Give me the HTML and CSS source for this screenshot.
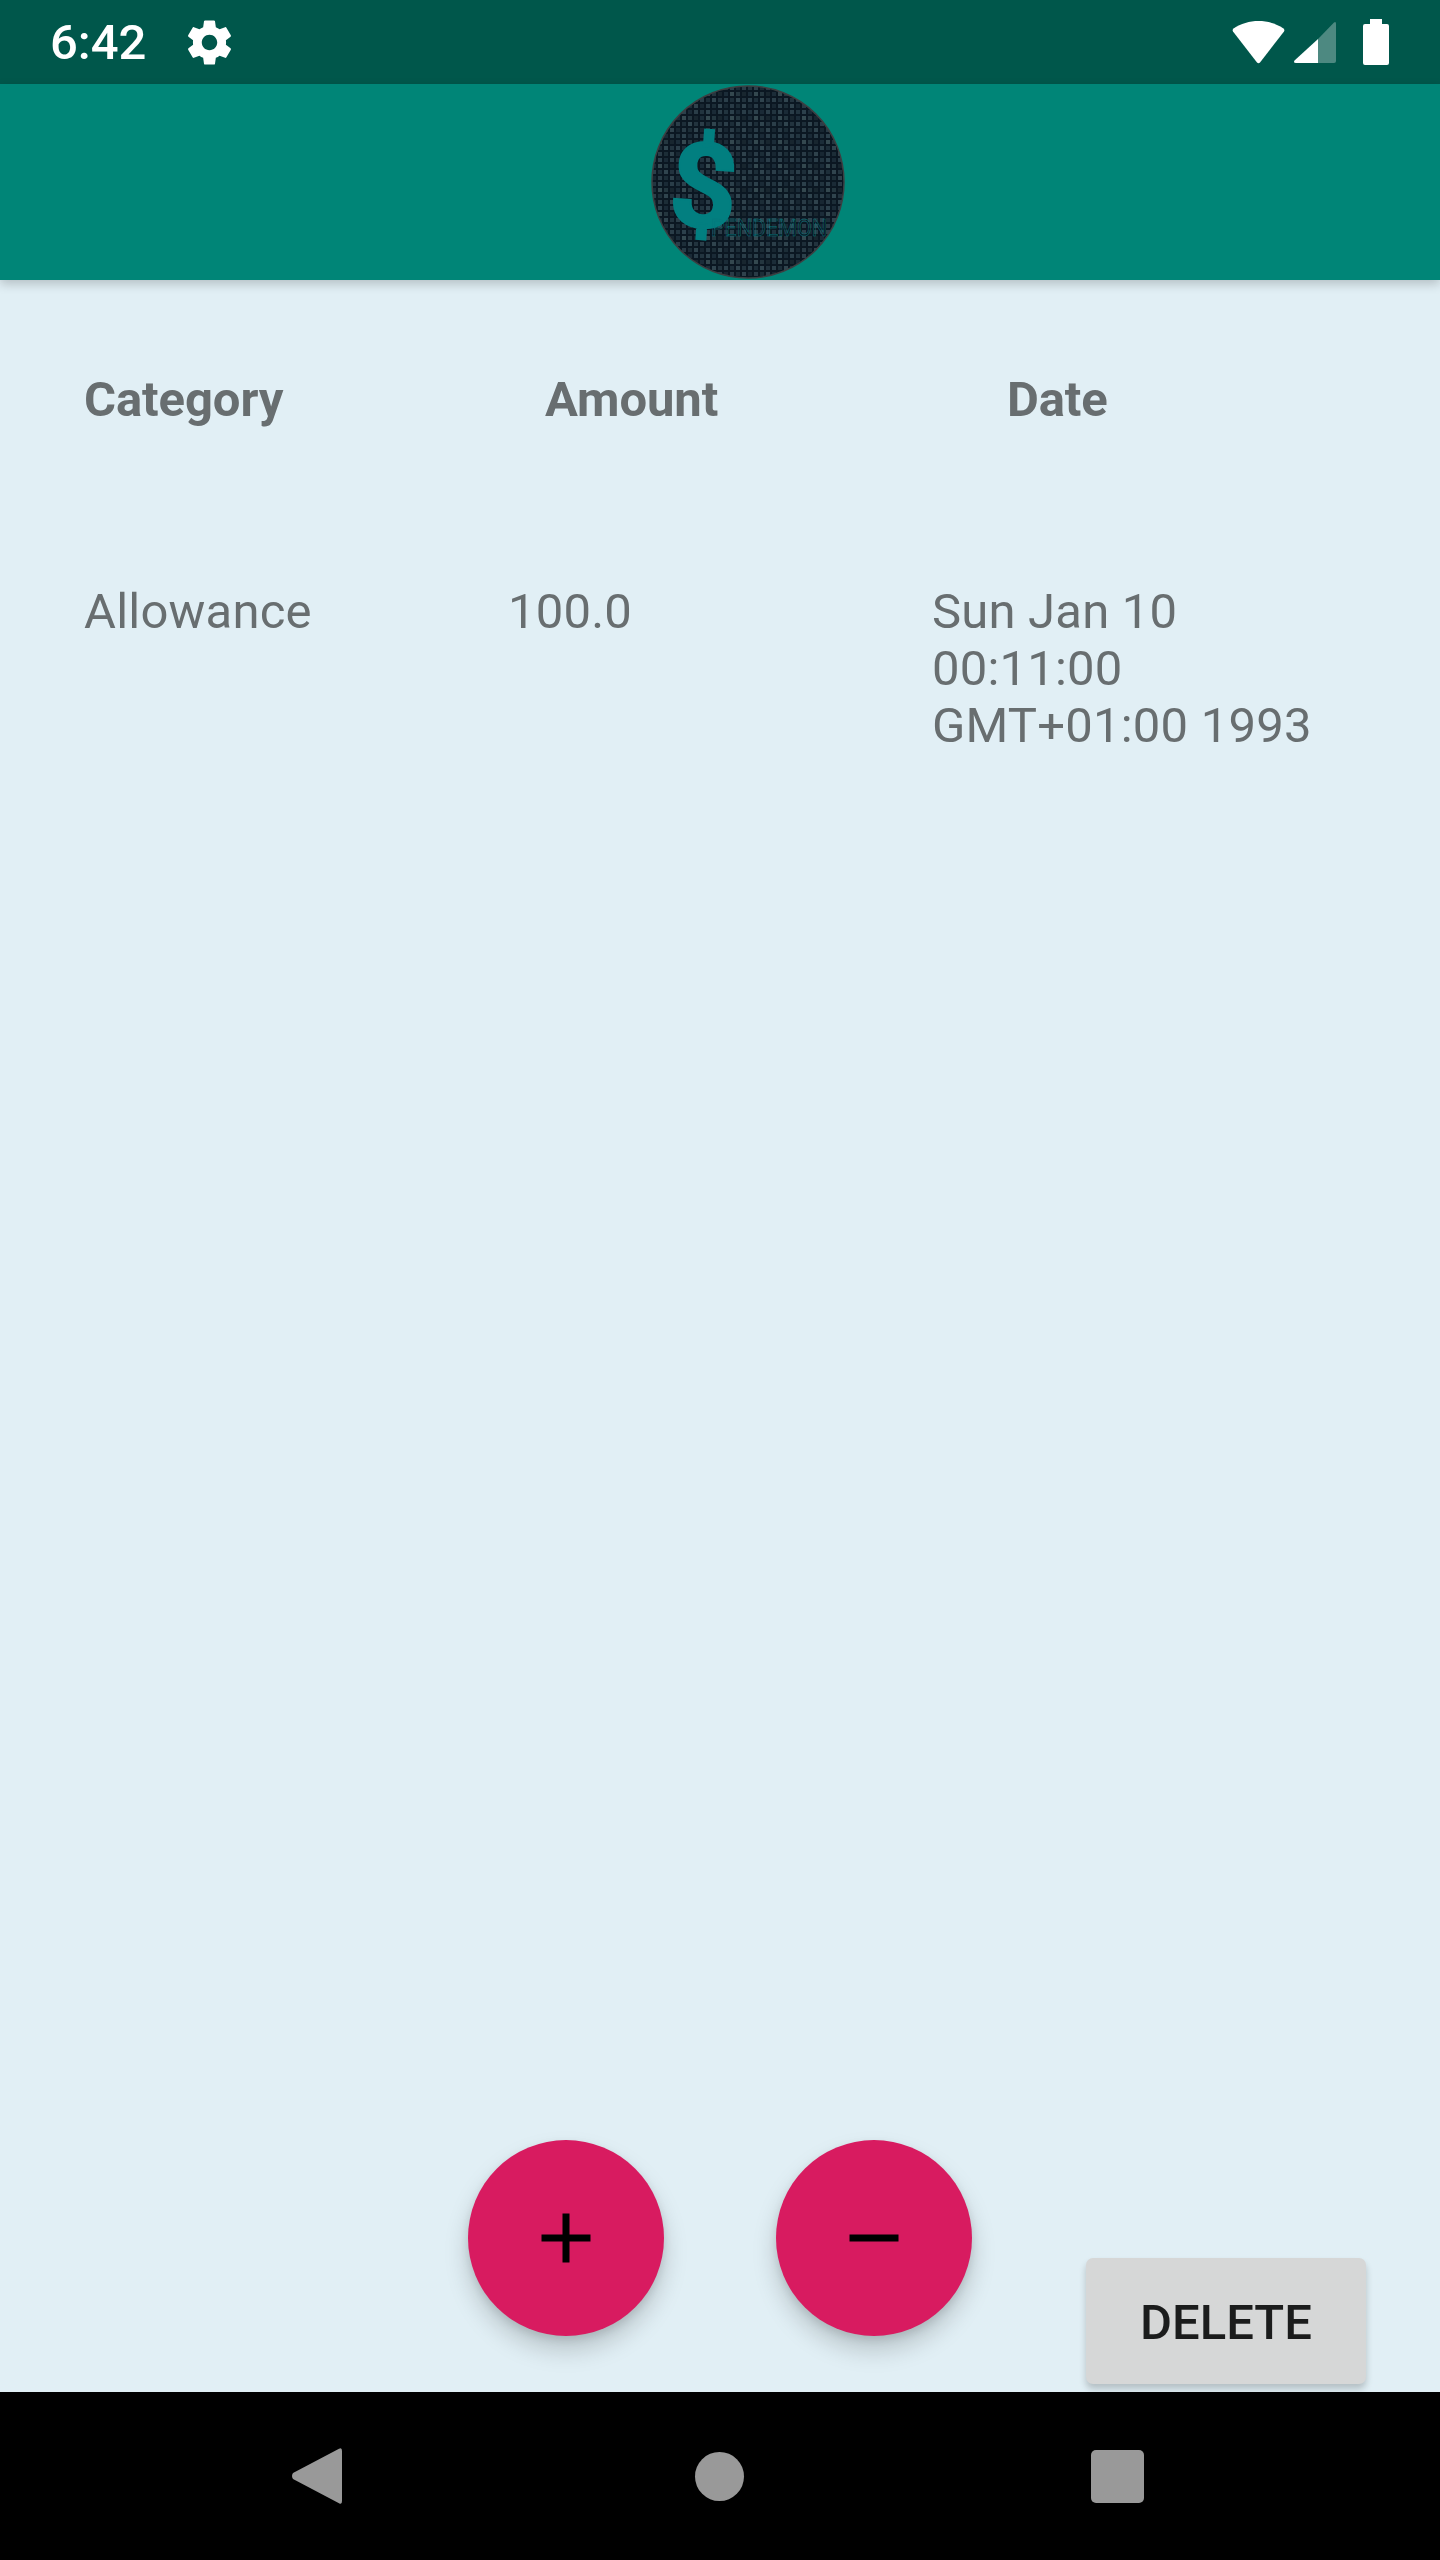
FILE: index.html
```html
<!DOCTYPE html>
<html lang="en">
<head>
  <meta charset="UTF-8" />
  <title>Spendemon</title>
  <link rel="stylesheet" href="styles.css">
</head>
<body>

  <div class="status-bar">
    <span class="clock">6:42</span>
    <svg class="gear" viewBox="0 0 24 24" width="53" height="53"><path fill="#fff" d="M19.43 12.98c.04-.32.07-.64.07-.98s-.03-.66-.07-.98l2.11-1.65c.19-.15.24-.42.12-.64l-2-3.46c-.12-.22-.39-.3-.61-.22l-2.49 1c-.52-.4-1.08-.73-1.69-.98l-.38-2.65C14.46 2.18 14.25 2 14 2h-4c-.25 0-.46.18-.49.42l-.38 2.65c-.61.25-1.17.59-1.69.98l-2.49-1c-.23-.09-.49 0-.61.22l-2 3.46c-.13.22-.07.49.12.64l2.11 1.65c-.04.32-.07.65-.07.98s.03.66.07.98l-2.11 1.65c-.19.15-.24.42-.12.64l2 3.46c.12.22.39.3.61.22l2.49-1c.52.4 1.08.73 1.69.98l.38 2.65c.03.24.24.42.49.42h4c.25 0 .46-.18.49-.42l.38-2.65c.61-.25 1.17-.59 1.69-.98l2.49 1c.23.09.49 0 .61-.22l2-3.46c.12-.22.07-.49-.12-.64l-2.11-1.65zM12 15.5c-1.93 0-3.5-1.57-3.5-3.5s1.57-3.5 3.5-3.5 3.5 1.57 3.5 3.5-1.57 3.5-3.5 3.5z"/></svg>
    <div class="status-icons">
      <svg viewBox="0 0 53 43" width="53" height="43"><path fill="#fff" d="M1.5 7.5C16-2.5 37-2.5 51.500 7.500Q53 9 52 10.500L28 41.500Q26.500 43 25 41.500L1 10.500Q0 9 1.500 7.500Z"/></svg>
      <svg viewBox="0 0 42 42" width="42" height="42"><path fill="#fff" fill-opacity=".3" d="M24 18L40 1.500Q42 0 42 3V40Q42 42 40 42H24Z"/><path fill="#fff" d="M24 18V42H2Q-1 42 .5 39.500Z"/></svg>
      <svg viewBox="0 0 26 46" width="26" height="46"><path fill="#fff" d="M7 0H19V5H24Q26 5 26 7V44Q26 46 24 46H2Q0 46 0 44V7Q0 5 2 5H7Z"/></svg>
    </div>
  </div>

  <header class="app-bar">
    <svg class="logo" viewBox="0 0 194 194" width="194" height="194">
      <defs>
        <pattern id="grid" width="24" height="24" patternUnits="userSpaceOnUse">
          <rect width="24" height="24" fill="#0b1722"/>
          <rect x="1" y="1" width="4" height="4" fill="#22343f"/>
          <rect x="7" y="1" width="4" height="4" fill="#2c404b"/>
          <rect x="13" y="1" width="4" height="4" fill="#1a2a36"/>
          <rect x="19" y="1" width="4" height="4" fill="#2a3d48"/>
          <rect x="1" y="7" width="4" height="4" fill="#1b2c38"/>
          <rect x="7" y="7" width="4" height="4" fill="#34484f"/>
          <rect x="13" y="7" width="4" height="4" fill="#24363f"/>
          <rect x="19" y="7" width="4" height="4" fill="#18262f"/>
          <rect x="1" y="13" width="4" height="4" fill="#2b3e49"/>
          <rect x="7" y="13" width="4" height="4" fill="#1d2e39"/>
          <rect x="13" y="13" width="4" height="4" fill="#30444e"/>
          <rect x="19" y="13" width="4" height="4" fill="#22333e"/>
          <rect x="1" y="19" width="4" height="4" fill="#182732"/>
          <rect x="7" y="19" width="4" height="4" fill="#293b46"/>
          <rect x="13" y="19" width="4" height="4" fill="#1c2d37"/>
          <rect x="19" y="19" width="4" height="4" fill="#2f424c"/>
        </pattern>
      </defs>
      <circle cx="97" cy="97" r="96" fill="url(#grid)" stroke="#3c3f42" stroke-width="1.500"/>
      <text class="logo-dollar" x="19" y="142" transform="rotate(4 54 97)">$</text>
      <text class="logo-name" x="60" y="151" textLength="116" lengthAdjust="spacingAndGlyphs">PENDEMON</text>
    </svg>
  </header>

  <main class="content">
    <div class="table-head">
      <div>Category</div>
      <div>Amount</div>
      <div>Date</div>
    </div>
    <div class="table-row">
      <div>Allowance</div>
      <div>100.0</div>
      <div>Sun Jan 10 00:11:00 GMT+01:00 1993</div>
    </div>

    <div class="actions">
      <button class="fab">
        <svg viewBox="0 0 24 24" width="84" height="84"><path d="M19 13h-6v6h-2v-6H5v-2h6V5h2v6h6v2z"/></svg>
      </button>
      <button class="fab">
        <svg viewBox="0 0 24 24" width="84" height="84"><path d="M19 13H5v-2h14v2z"/></svg>
      </button>
      <button class="delete-button">DELETE</button>
    </div>
  </main>

  <nav class="nav-bar">
    <svg class="nav-back" viewBox="0 0 50 56" width="50" height="56"><path fill="#999" d="M47 .8Q50-1 50 3V53Q50 57 47 55.200L1 31Q-1 28 1 25Z"/></svg>
    <div class="nav-home"></div>
    <div class="nav-recent"></div>
  </nav>

</body>
</html>
```

FILE: styles.css
```css
body {
  margin: 0;
  height: 2560px;
  display: flex;
  flex-direction: column;
  font-family: Roboto, sans-serif;
  font-size: 49px;
  line-height: 57px;
  color: #686e70;
  background: #e1eff5;
}
.status-bar {
  height: 84px;
  flex: none;
  display: flex;
  align-items: center;
  padding-left: 50px;
  background: #00574b;
  color: white;
}
.clock {
  font-weight: 500;
}
.gear {
  margin-left: 37px;
}
.status-icons {
  margin-left: auto;
  margin-right: 51px;
  display: flex;
  align-items: center;
  gap: 9px;
}
.status-icons svg:last-child {
  margin-left: 18px;
}
.app-bar {
  height: 196px;
  flex: none;
  display: flex;
  align-items: center;
  padding-left: 651px;
  background: #008577;
  box-shadow: 0 4px 10px rgba(0, 0, 0, 0.2);
  position: relative;
}
.logo-dollar {
  font-family: Roboto, sans-serif;
  font-weight: 700;
  font-size: 118px;
  fill: #027f80;
  stroke: #027f80;
  stroke-width: 2;
}
.logo-name {
  font-family: Roboto, sans-serif;
  font-size: 24px;
  fill: none;
  stroke: #07767c;
  stroke-width: 0.5;
}
.content {
  flex: 1;
  display: flex;
  flex-direction: column;
}
.table-head {
  display: grid;
  grid-template-columns: 461px 462px 1fr;
  padding: 91px 0 0 84px;
  font-weight: 700;
  letter-spacing: -0.1px;
}
.table-row {
  display: grid;
  grid-template-columns: 424px 424px 424px;
  padding: 155px 0 0 84px;
  letter-spacing: 0.2px;
}
.actions {
  margin-top: auto;
  display: flex;
  align-items: flex-end;
  padding-left: 468px;
}
.fab {
  width: 196px;
  height: 196px;
  margin: 0 112px 56px 0;
  padding: 0;
  border: none;
  border-radius: 50%;
  display: flex;
  align-items: center;
  justify-content: center;
  background: #d81b60;
  box-shadow: 0 14px 24px rgba(0, 0, 0, 0.18), 0 4px 8px rgba(0, 0, 0, 0.1);
}
.delete-button {
  width: 280px;
  height: 126px;
  margin: 0 0 8px 2px;
  padding: 2px 0 0;
  border: none;
  border-radius: 7px;
  background: #d6d7d7;
  color: #1b1c1c;
  font-family: Roboto, sans-serif;
  font-size: 49px;
  font-weight: 500;
  box-shadow: 0 5px 7px rgba(0, 0, 0, 0.2);
}
.nav-bar {
  height: 168px;
  flex: none;
  display: flex;
  align-items: center;
  padding-left: 292px;
  background: black;
}
.nav-home {
  width: 49px;
  height: 49px;
  margin-left: 353px;
  border-radius: 50%;
  background: #999;
}
.nav-recent {
  width: 53px;
  height: 53px;
  margin-left: 347px;
  border-radius: 5px;
  background: #999;
}
```
